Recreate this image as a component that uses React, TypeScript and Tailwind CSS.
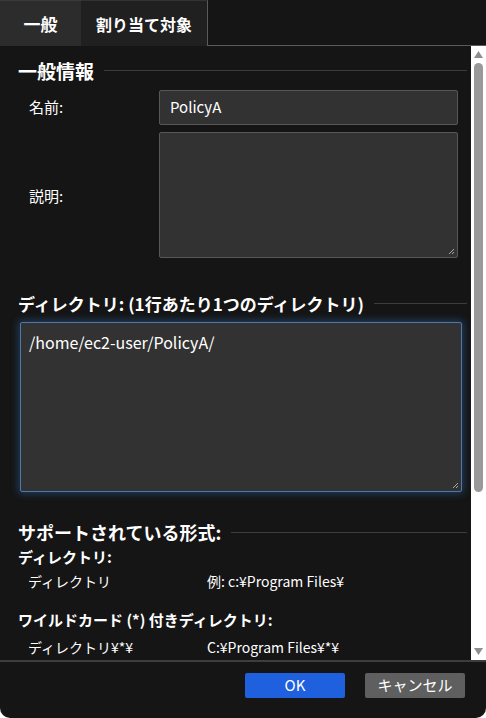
import React from "react";

const font = { fontFamily: '"Noto Sans CJK JP", "Noto Sans", sans-serif' };

export default function App() {
  return (
    <div className="w-[486px] h-[718px] bg-[#151515] text-white flex flex-col overflow-hidden rounded-br-[10px] rounded-bl-[10px]" style={font}>
      {/* Tabs */}
      <div className="h-[46px] flex shrink-0">
        <div className="w-[81px] bg-[#2c2c2c] border-t border-[#3a3a3a] flex items-center justify-center text-[17px] font-bold">一般</div>
        <div className="w-[127px] bg-[#202020] border-t border-r border-[#5a5a5a] border-t-[#333] flex items-center justify-center text-[16px] font-bold">割り当て対象</div>
        <div className="flex-1 border-b border-[#5a5a5a]"></div>
      </div>

      {/* Body with scrollbar */}
      <div className="flex-1 flex min-h-0">
        <div className="flex-1 overflow-hidden pl-[18px] pr-[4px]">
          {/* 一般情報 */}
          <div className="flex items-center mt-[11px] h-[26px]">
            <span className="text-[19px] font-bold leading-none">一般情報</span>
            <div className="flex-1 h-px bg-[#3c3c3c] ml-[10px]"></div>
          </div>
          <div className="flex items-center mt-[7px]">
            <span className="w-[141px] pl-[11px] text-[15px]">名前:</span>
            <div className="w-[299px] h-[35px] bg-[#323232] border border-[#575757] rounded-[2px] flex items-center px-[10px] text-[15px]">PolicyA</div>
          </div>
          <div className="flex items-center mt-[7px]">
            <span className="w-[141px] pl-[11px] text-[15px] pt-[3px]">説明:</span>
            <div className="relative w-[299px] h-[126px] bg-[#323232] border border-[#575757] rounded-[2px]">
              <svg className="absolute right-[2px] bottom-[2px]" width="7" height="7" viewBox="0 0 7 7">
                <path d="M6 1L1 6M6 4L4 6" stroke="#aaa" strokeWidth="1" />
              </svg>
            </div>
          </div>

          {/* ディレクトリ */}
          <div className="flex items-center mt-[32px] h-[26px]">
            <span className="text-[17px] font-bold leading-none whitespace-nowrap">ディレクトリ: (1行あたり1つのディレクトリ)</span>
            <div className="flex-1 h-px bg-[#3c3c3c] ml-[10px]"></div>
          </div>
          <div className="relative mt-[6px] ml-[2px] w-[442px] h-[170px] bg-[#323232] border border-[#4f77a8] rounded-[2px] shadow-[0_0_7px_2px_rgba(40,90,150,0.55)] px-[8px] pt-[7px] text-[16px]">
            /home/ec2-user/PolicyA/
            <svg className="absolute right-[2px] bottom-[2px]" width="7" height="7" viewBox="0 0 7 7">
              <path d="M6 1L1 6M6 4L4 6" stroke="#aaa" strokeWidth="1" />
            </svg>
          </div>

          {/* サポートされている形式 */}
          <div className="flex items-center mt-[27px] h-[26px]">
            <span className="text-[18px] font-bold leading-none whitespace-nowrap">サポートされている形式:</span>
            <div className="flex-1 h-px bg-[#3c3c3c] ml-[10px]"></div>
          </div>
          <div className="text-[15px] font-bold leading-none mt-[4px]">ディレクトリ:</div>
          <div className="flex text-[14px] mt-[10px] leading-none">
            <span className="w-[189px] pl-[10px]">ディレクトリ</span>
            <span>例: c:¥Program Files¥</span>
          </div>
          <div className="text-[15px] font-bold leading-none mt-[24px]">ワイルドカード (*) 付きディレクトリ:</div>
          <div className="flex text-[14px] mt-[13px] leading-none">
            <span className="w-[189px] pl-[10px]">ディレクトリ¥*¥</span>
            <span>C:¥Program Files¥*¥</span>
          </div>
        </div>

        {/* Scrollbar */}
        <div className="w-[15px] bg-white flex flex-col items-center shrink-0">
          <svg className="mt-[5px]" width="9" height="7" viewBox="0 0 9 7">
            <path d="M4.5 0L9 7H0Z" fill="#8e8e8e" />
          </svg>
          <div className="mt-[5px] w-[9px] h-[429px] bg-[#999] rounded-[5px]"></div>
          <div className="flex-1"></div>
          <svg className="mb-[5px]" width="9" height="7" viewBox="0 0 9 7">
            <path d="M0 0H9L4.5 7Z" fill="#8e8e8e" />
          </svg>
        </div>
      </div>

      {/* Footer */}
      <div className="h-[58px] shrink-0 border-t-2 border-[#3d3d3d] flex items-start justify-end gap-[20px] pr-[21px] pt-[11px]">
        <div className="w-[100px] h-[25px] bg-[#1f60df] rounded-[2px] flex items-center justify-center text-[15px]">OK</div>
        <div className="w-[100px] h-[25px] bg-[#5f5f5f] rounded-[2px] flex items-center justify-center text-[15px]">キャンセル</div>
      </div>
    </div>
  );
}
